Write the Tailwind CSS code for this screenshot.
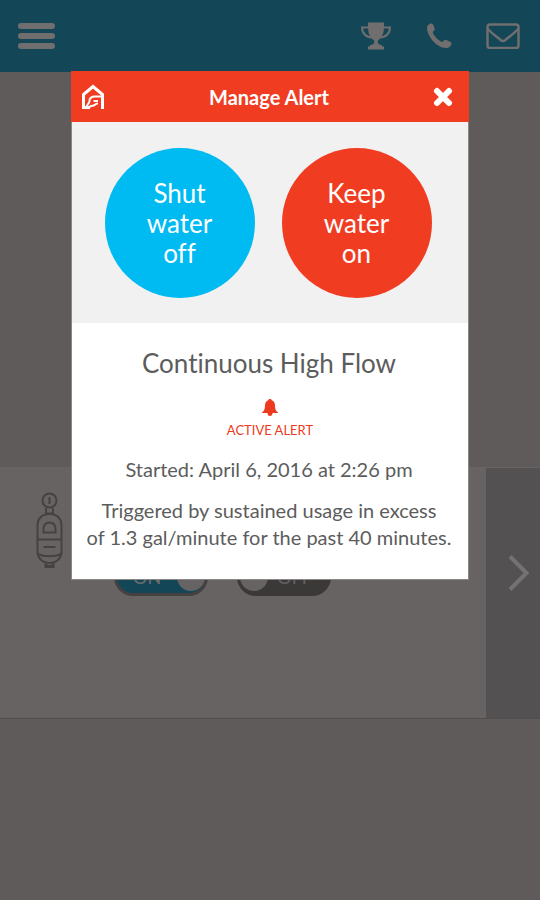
<!DOCTYPE html>
<html lang="en">
  <head>
    <meta charset="UTF-8" />
    <meta name="viewport" content="width=device-width, initial-scale=1" />
    <title>Manage Alert</title>
    <script src="https://cdn.jsdelivr.net/npm/@tailwindcss/browser@4"></script>
  </head>

  <body class="min-h-screen flex flex-col bg-[#5f5b5a] font-['Lato','Open_Sans',sans-serif] [font-variant-ligatures:none]">
    <!-- Top bar -->
    <header class="h-18 shrink-0 flex items-center justify-between pl-[18px] pr-5 bg-[#134758] text-[#706e6e]">
      <button type="button" aria-label="Menu" class="flex flex-col gap-1">
        <span class="block w-[37px] h-1.5 rounded-full bg-current"></span>
        <span class="block w-[37px] h-1.5 rounded-full bg-current"></span>
        <span class="block w-[37px] h-1.5 rounded-full bg-current"></span>
      </button>
      <nav class="flex items-center gap-[34px]">
        <a href="#rewards" aria-label="Rewards">
          <svg class="w-8 h-7" viewBox="0 0 32 28" fill="currentColor">
            <path d="M8 .5h16v4c0 7-2 11-5.500 13.500-1 .8-1 2.800 0 4 1.500.8 4 .8 4 2.500h1.500v3H8v-3h1.500c0-1.700 2.500-1.700 4-2.500 1-1.200 1-3.200 0-4C10 15.500 8 11.500 8 4.500z" />
            <path d="M8.500 5.500H2C2 11 6 15.500 12 15.500M23.500 5.500H30c0 5.500-4 10-10 10" fill="none" stroke="currentColor" stroke-width="2" />
          </svg>
        </a>
        <a href="#call" aria-label="Call">
          <svg class="w-[26px] h-[26px]" viewBox="0 0 26 26" fill="currentColor">
            <path d="M1 4.500C1 2.500 3.500.5 5.500.5c1.500 0 2 2 2.800 4 .7 2 .5 2.700-.8 3.800-1 .9-.8 1.600 0 3 1.700 3 4 5.200 7 7 1.400.8 2 .8 3-.3 1.200-1.300 1.900-1.500 3.900-.6 2.600 1.200 4.100 1.700 4.100 2.800 0 2.600-2.500 4.800-5.500 4.800C11 25 1 13.500 1 4.500z" />
          </svg>
        </a>
        <a href="#messages" aria-label="Messages">
          <svg class="w-[34px] h-[26px]" viewBox="0 0 34 26" fill="none" stroke="currentColor" stroke-width="2.500" stroke-linejoin="round">
            <rect x="1.500" y="1.500" width="31" height="23.500" rx="2.500" />
            <path d="M2 6c4 4.500 9 8 12.500 11 1.700 1.300 3.300 1.300 5 0C23 14 28 10.500 32 6" />
          </svg>
        </a>
      </nav>
    </header>

    <!-- Device panel, sits behind the dialog -->
    <main class="grow pt-[395px]">
      <section class="flex h-[252px] border-y border-[#504d4c] border-t-[#676362] bg-[#676362]">
        <div class="grow flex pl-[35px]">
          <svg class="w-[29px] h-[77px] mt-6 shrink-0" viewBox="0 0 29 77" fill="none" stroke="#454241" stroke-width="2">
            <circle cx="14.500" cy="8.500" r="7" />
            <path d="M14.500 5v7M11 16v5.500M18 16v5.500M10 21.500h9" />
            <path d="M2.500 33c0-6 4-11 12-11s12 5 12 11v27c0 6-5 11-12 11s-12-5-12-11z" />
            <path d="M2.500 47.500h24M8.500 55h12M2.500 62c7 3 17 3 24 0" />
            <path d="M8.500 40.500v-3c0-4 2-7 6-7s6 3 6 7v3z" />
            <path d="M11 71.500v3h7v-3" stroke-width="3" />
          </svg>
          <div class="flex gap-[29px] pt-[90px] pl-[50px]">
            <button type="button" class="flex items-center justify-between w-[94px] h-[38px] pl-4 rounded-full border-3 border-[#454141] bg-[#134758] text-[#706e6e] text-lg">
              ON
              <span class="block size-7 rounded-full bg-[#676362]"></span>
            </button>
            <button type="button" class="flex items-center justify-between w-[94px] h-[38px] pr-4 rounded-full border-3 border-[#3b3838] bg-[#3b3838] text-[#676362] text-lg">
              <span class="block size-7 rounded-full bg-[#676362]"></span>
              OFF
            </button>
          </div>
        </div>
        <button type="button" aria-label="Next" class="w-[54px] shrink-0 flex items-center justify-end pr-2.5 pb-10 bg-[#535152] text-[#747272]">
          <svg class="w-[23px] h-[38px]" viewBox="0 0 23 38" fill="none" stroke="currentColor" stroke-width="4">
            <path d="M3 2.500L19.500 19 3 35.500" />
          </svg>
        </button>
      </section>
    </main>

    <!-- Alert dialog -->
    <div class="absolute inset-0 px-[71px] pt-[71px]">
      <div role="dialog" aria-labelledby="dialog-title" class="bg-white text-[#5c5c5c] text-center pb-7 border-x border-b border-[#8a8786]">
        <div class="flex items-center justify-between h-[51px] pl-2.5 pr-4 -mx-px bg-[#f03d22] text-white">
          <svg class="w-6 h-[26px]" viewBox="0 0 24 26" fill="none" stroke="currentColor" stroke-width="3">
            <path d="M9 23.500H2.500V10.500L12 2.500l9.500 8V25" />
            <path d="M20 12.500h-6c-3.500 0-5.500 2-5.500 4.500 0 2-2 3-3 6M17 17h-4.500M8 23.500c2-3 4-1 5.500-2.500 1-1 2-1.500 3.500-1.500" stroke-width="2" />
          </svg>
          <h1 id="dialog-title" class="text-xl font-bold">Manage Alert</h1>
          <button type="button" aria-label="Close">
            <svg class="size-5" viewBox="0 0 20 20" fill="none" stroke="currentColor" stroke-width="6" stroke-linecap="round">
              <path d="M4 4l12 12M16 4L4 16" />
            </svg>
          </button>
        </div>

        <div class="flex justify-center gap-[27px] pr-1 pt-[26px] pb-[25px] bg-[#f1f1f1] text-white text-[26px] leading-[30px]">
          <button type="button" class="size-[150px] rounded-full bg-[#00baf2]">Shut<br />water<br />off</button>
          <button type="button" class="size-[150px] rounded-full bg-[#f03d22]">Keep<br />water<br />on</button>
        </div>

        <h2 class="pt-6 pr-0.5 text-[26px] leading-8">Continuous High Flow</h2>
        <div class="flex flex-col items-center pt-5 text-[#ee3a20]">
          <svg class="w-4 h-[17px]" viewBox="0 0 16 17" fill="currentColor">
            <path d="M8 0c1 0 1.500.5 1.700 1.200C12 2 13 4 13 6.500c0 3.500.7 5.500 3 7V14h-5.500c0 1.800-1 3-2.500 3s-2.500-1.200-2.500-3H0v-.5c2.300-1.500 3-3.500 3-7C3 4 4 2 6.300 1.200 6.500.5 7 0 8 0z" />
          </svg>
          <p class="pt-1 text-[13px] leading-5">ACTIVE ALERT</p>
        </div>
        <p class="pt-4 pr-0.5 text-xl leading-[27px]">Started: April 6, 2016 at 2:26 pm</p>
        <p class="pt-3.5 pr-0.5 text-xl leading-[27px]">Triggered by sustained usage in excess <br />of 1.3 gal/minute for the past 40 minutes.</p>
      </div>
    </div>
  </body>
</html>
